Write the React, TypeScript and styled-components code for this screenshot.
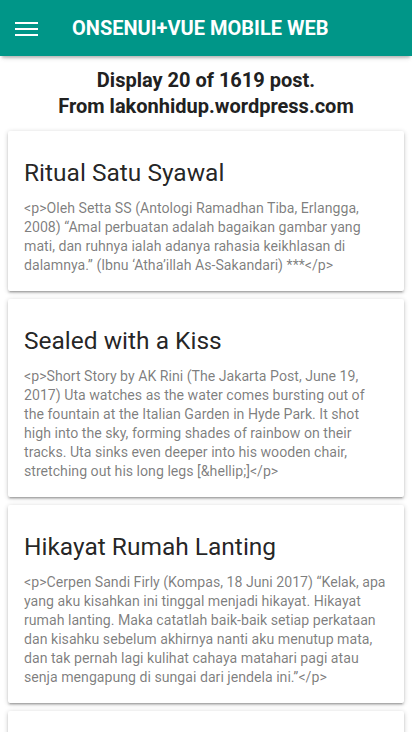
import React from "react";
import styled, { createGlobalStyle } from "styled-components";

const GlobalStyle = createGlobalStyle`
  html, body { margin: 0; padding: 0; background: #ffffff; }
  body { font-family: Roboto, "Noto Sans", sans-serif; -webkit-font-smoothing: antialiased; }
  * { box-sizing: border-box; }
`;

const Page = styled.div`
  width: 412px;
  min-height: 732px;
  background: #ffffff;
  overflow: hidden;
`;

const Toolbar = styled.header`
  height: 56px;
  background: #009688;
  display: flex;
  align-items: center;
  box-shadow: 0 4px 2px -2px rgba(0, 0, 0, 0.14), 0 3px 5px -2px rgba(0, 0, 0, 0.12), 0 1px 8px -2px rgba(0, 0, 0, 0.2);
  position: relative;
  z-index: 2;
`;

const MenuButton = styled.button`
  width: 72px;
  height: 56px;
  border: 0;
  background: transparent;
  padding: 0 0 0 15px;
  display: flex;
  align-items: center;
  cursor: pointer;
`;

const ToolbarTitle = styled.h1`
  margin: 0;
  color: #ffffff;
  font-family: Roboto, sans-serif;
  font-size: 20px;
  font-weight: 700;
  letter-spacing: 0;
  text-transform: uppercase;
`;

const Intro = styled.p`
  margin: 0;
  padding: 11px 16px 4px;
  text-align: center;
  font-size: 20px;
  line-height: 26px;
  font-weight: 700;
  color: #212121;
`;

const List = styled.div`
  display: flex;
  flex-direction: column;
  gap: 8px;
  padding: 8px;
`;

const Card = styled.article`
  padding: 16px;
  background: #ffffff;
  border-radius: 2px;
  box-shadow: 0 2px 2px 0 rgba(0, 0, 0, 0.14), 0 3px 1px -2px rgba(0, 0, 0, 0.12), 0 1px 5px 0 rgba(0, 0, 0, 0.2);
`;

const CardTitle = styled.h2`
  margin: 9px 0 10px;
  font-size: 24.5px;
  line-height: 33px;
  font-weight: 400;
  color: rgba(0, 0, 0, 0.87);
`;

const CardContent = styled.div`
  font-size: 14.15px;
  line-height: 19px;
  color: rgba(0, 0, 0, 0.52);
`;

const posts = [
  {
    title: "Ritual Satu Syawal",
    content:
      "<p>Oleh Setta SS (Antologi Ramadhan Tiba, Erlangga, 2008) \u201cAmal perbuatan adalah bagaikan gambar yang mati, dan ruhnya ialah adanya rahasia keikhlasan di dalamnya.\u201d (Ibnu \u2018Atha\u2019illah As-Sakandari) ***</p>",
  },
  {
    title: "Sealed with a Kiss",
    content:
      "<p>Short Story by AK Rini (The Jakarta Post, June 19, 2017) Uta watches as the water comes bursting out of the fountain at the Italian Garden in Hyde Park. It shot high into the sky, forming shades of rainbow on their tracks. Uta sinks even deeper into his wooden chair, stretching out his long legs [&hellip;]</p>",
  },
  {
    title: "Hikayat Rumah Lanting",
    content:
      "<p>Cerpen Sandi Firly (Kompas, 18 Juni 2017) \u201cKelak, apa yang aku kisahkan ini tinggal menjadi hikayat. Hikayat rumah lanting. Maka catatlah baik-baik setiap perkataan dan kisahku sebelum akhirnya nanti aku menutup mata, dan tak pernah lagi kulihat cahaya matahari pagi atau senja mengapung di sungai dari jendela ini.\u201d</p>",
  },
  {
    title: "Lelaki di Ujung Senja",
    content: "<p>Cerpen</p>",
  },
];

const MenuIcon = () => (
  <svg width="24" height="24" viewBox="0 0 24 24" fill="#ffffff" aria-hidden="true">
    <rect x="0" y="6" width="23" height="2" />
    <rect x="0" y="12" width="23" height="2" />
    <rect x="0" y="18" width="23" height="2" />
  </svg>
);

export default function App() {
  return (
    <Page>
      <GlobalStyle />
      <Toolbar>
        <MenuButton aria-label="menu">
          <MenuIcon />
        </MenuButton>
        <ToolbarTitle>OnsenUI+Vue Mobile Web</ToolbarTitle>
      </Toolbar>
      <Intro>
        Display 20 of 1619 post.
        <br />
        From lakonhidup.wordpress.com
      </Intro>
      <List>
        {posts.map((p) => (
          <Card key={p.title}>
            <CardTitle>{p.title}</CardTitle>
            <CardContent>{p.content}</CardContent>
          </Card>
        ))}
      </List>
    </Page>
  );
}
